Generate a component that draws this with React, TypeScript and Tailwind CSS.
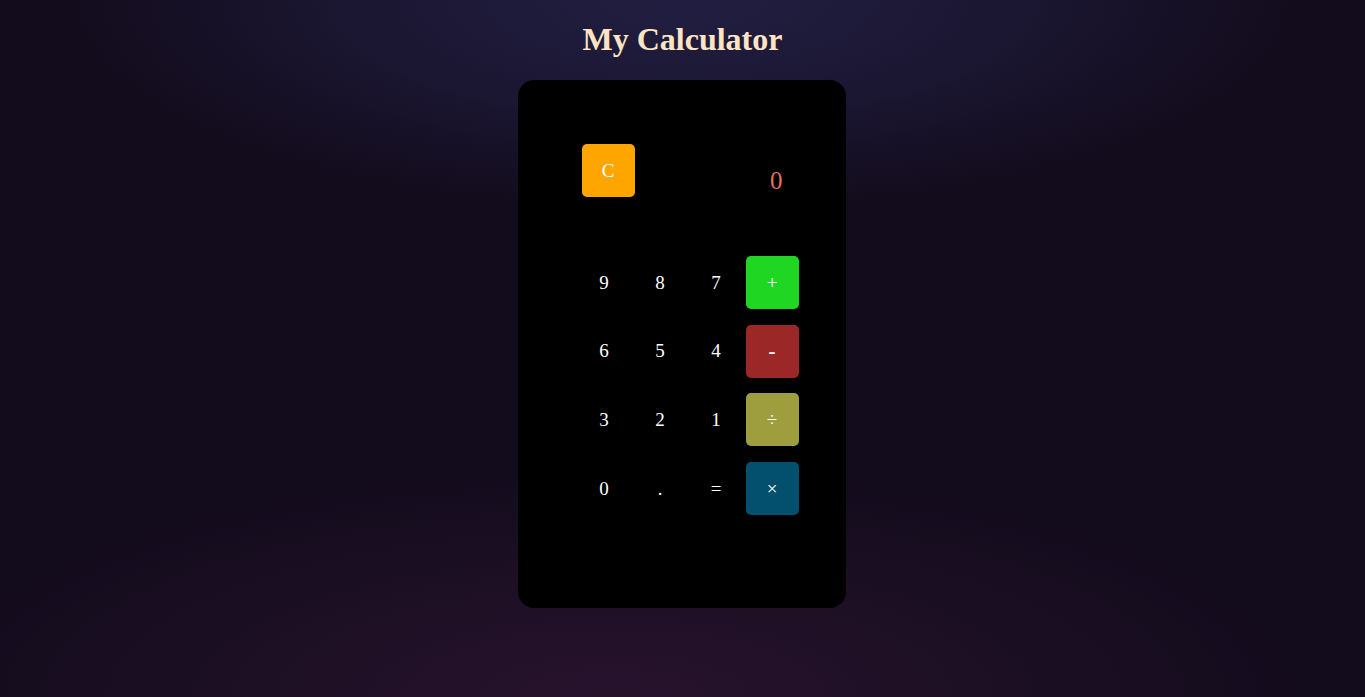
import React, { useState } from "react";

const serif = "font-['Liberation_Serif','Times_New_Roman',serif]";

const ops: Record<string, string> = {
  "+": "bg-[#1fd623]",
  "-": "bg-[#9b2727]",
  "÷": "bg-[#9e9e3e]",
  "×": "bg-[#02506d]",
};

const rows = [
  ["9", "8", "7", "+"],
  ["6", "5", "4", "-"],
  ["3", "2", "1", "÷"],
  ["0", ".", "=", "×"],
];

export default function App() {
  const [display, setDisplay] = useState("0");

  const press = (k: string) => {
    if (k === "=") {
      try {
        const expr = display.replace(/×/g, "*").replace(/÷/g, "/");
        // eslint-disable-next-line no-new-func
        setDisplay(String(Function(`return (${expr})`)()));
      } catch {
        setDisplay("0");
      }
      return;
    }
    setDisplay((d) => (d === "0" && k !== "." ? k : d + k));
  };

  return (
    <div
      className={`min-h-screen w-full flex flex-col items-center ${serif} bg-[#130c1d] bg-[radial-gradient(ellipse_45%_30%_at_50%_0%,#211e41_0%,rgba(32,29,63,0.6)_55%,rgba(19,12,29,0)_100%),radial-gradient(ellipse_50%_32%_at_45%_100%,#27122c_0%,rgba(37,18,42,0.55)_55%,rgba(19,12,29,0)_100%)]`}
    >
      <h1 className="mt-[21px] mb-[22px] text-[32px] font-bold leading-[normal] text-[#ffe4c4]">
        My Calculator
      </h1>

      <div className="w-[328px] h-[528px] rounded-[16px] bg-black pt-[64px] pl-[60px] -translate-x-px">
        <div className="flex w-[221px] items-start">
          <button
            onClick={() => setDisplay("0")}
            className="ml-[4px] flex h-[53px] w-[53px] items-center justify-center rounded-[5px] bg-[#ffa500] text-[19px] leading-[normal] text-white"
          >
            C
          </button>
          <div className="ml-auto mr-[16px] mt-[23px] text-[25px] leading-[normal] text-[#e0705f]">
            {display}
          </div>
        </div>

        <div className="mt-[59px] grid w-[221px] grid-cols-[repeat(4,53px)] gap-x-[3px] gap-y-[15.7px]">
          {rows.flat().map((k) => (
            <button
              key={k}
              onClick={() => press(k)}
              className={`flex h-[53px] w-[53px] items-center justify-center rounded-[5px] text-[19px] leading-[normal] text-white ${
                ops[k] ?? "bg-transparent"
              } ${k === "-" ? "font-bold text-[21px]" : ""}`}
            >
              {k}
            </button>
          ))}
        </div>
      </div>
    </div>
  );
}
